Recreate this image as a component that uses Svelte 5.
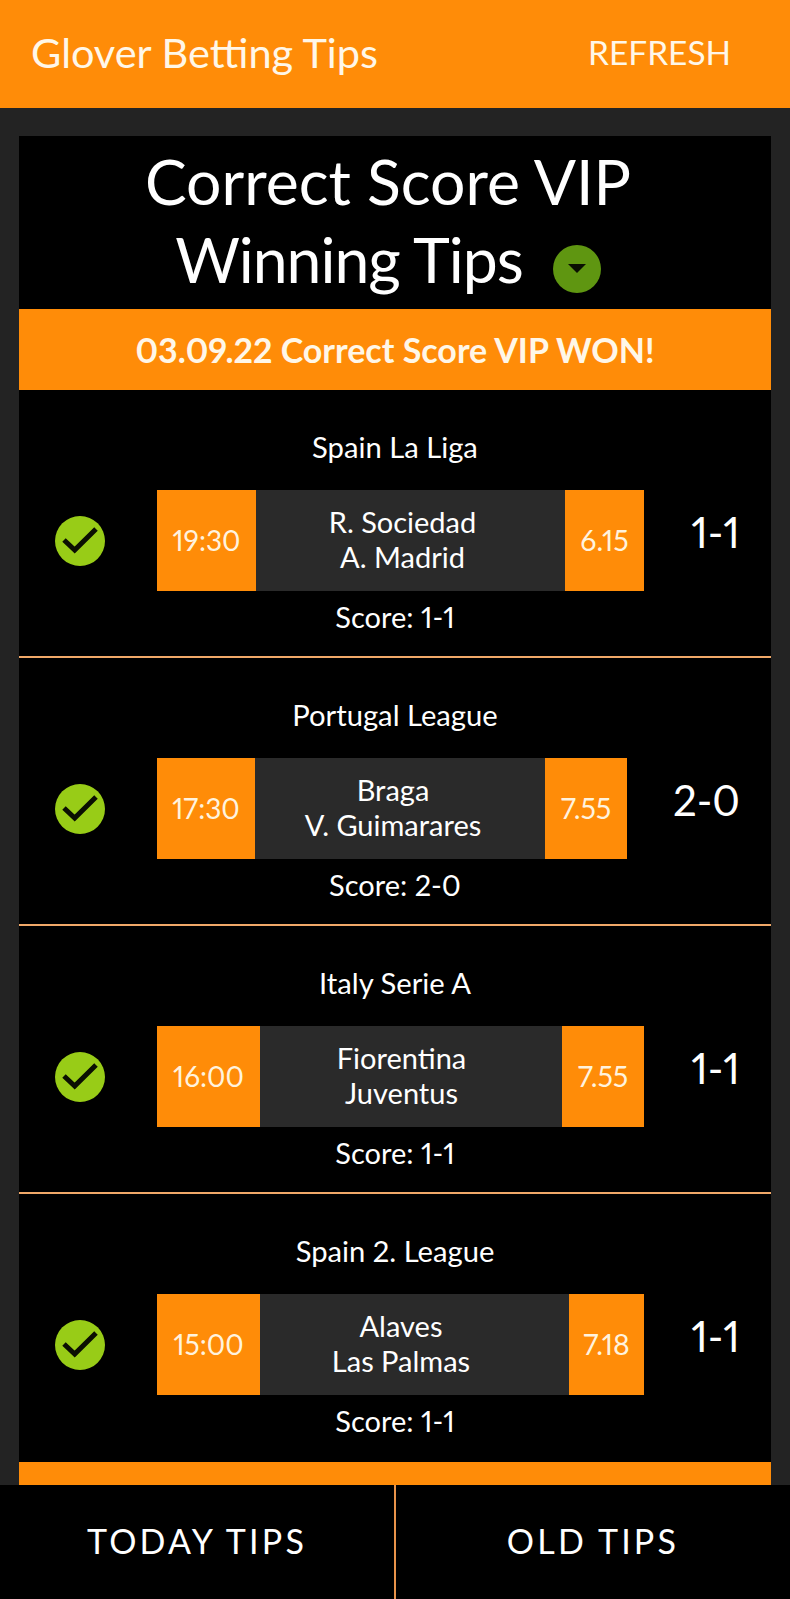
<script>
  const tips = [
    { league: 'Spain La Liga', time: '19:30', home: 'R. Sociedad', away: 'A. Madrid', odds: '6.15', score: '1-1', tw: 99, mw: 309, ow: 79, pad: 16 },
    { league: 'Portugal League', time: '17:30', home: 'Braga', away: 'V. Guimarares', odds: '7.55', score: '2-0', tw: 98, mw: 290, ow: 82, pad: 14 },
    { league: 'Italy Serie A', time: '16:00', home: 'Fiorentina', away: 'Juventus', odds: '7.55', score: '1-1', tw: 103, mw: 302, ow: 82, pad: 19 },
    { league: 'Spain 2. League', time: '15:00', home: 'Alaves', away: 'Las Palmas', odds: '7.18', score: '1-1', tw: 103, mw: 309, ow: 75, pad: 27 }
  ];
</script>

<div class="page">
  <header class="topbar">
    <span class="brand">Glover Betting Tips</span>
    <span class="refresh">REFRESH</span>
  </header>

  <main class="content">
    <section class="card">
      <h1 class="title">
        Correct Score VIP<br />
        <span class="second">Winning Tips</span>
        <svg class="drop" viewBox="0 0 48 48" aria-hidden="true">
          <circle cx="24" cy="24" r="24" fill="#5f9611" />
          <path d="M15 19h18l-9 9z" fill="#0a0f02" />
        </svg>
      </h1>
      <div class="banner">03.09.22 Correct Score VIP WON!</div>

      {#each tips as t}
        <article class="tip">
          <div class="league">{t.league}</div>
          <div class="match">
            <div class="status">
              <svg class="check" viewBox="0 0 50 50" aria-hidden="true">
                <circle cx="25" cy="25" r="25" fill="#98cc17" />
                <path d="M9 24 19.7 34 41 13" fill="none" stroke="#0b0f02" stroke-width="5" />
              </svg>
            </div>
            <div class="cell time" style="width:{t.tw}px">{t.time}</div>
            <div class="cell teams" style="width:{t.mw}px; padding-right:{t.pad}px">
              <span>{t.home}</span>
              <span>{t.away}</span>
            </div>
            <div class="cell odds" style="width:{t.ow}px">{t.odds}</div>
            <div class="result">{t.score}</div>
          </div>
          <div class="final">Score: {t.score}</div>
        </article>
      {/each}

      <div class="strip"></div>
    </section>
  </main>

  <nav class="tabs">
    <button class="tab">TODAY TIPS</button>
    <button class="tab right">OLD TIPS</button>
  </nav>
</div>

<style>
  :global(body) { margin: 0; background: #232323; }
  .page {
    width: 790px; height: 1599px; overflow: hidden;
    display: flex; flex-direction: column;
    background: #232323; color: #fff;
    font-family: "Lato", "Open Sans", sans-serif;
    font-variant-numeric: proportional-nums;
  }
  .topbar {
    height: 108px; flex: none; box-sizing: border-box;
    background: #ff8c08; color: #fff7e8;
    display: flex; align-items: center; justify-content: space-between;
    padding: 0 59px 4px 31px;
  }
  .brand { font-size: 41.5px; }
  .refresh { font-size: 33.4px; }
  .content { flex: 1; min-height: 0; padding: 28px 19px 0; overflow: hidden; }
  .card { background: #000; height: 100%; display: flex; flex-direction: column; }
  .title {
    margin: 0; height: 173px; flex: none; box-sizing: border-box; padding: 6px 14px 0 0;
    font-size: 62.5px; font-weight: 400; line-height: 78px; text-align: center;
  }
  .second { letter-spacing: -1px; }
  .drop { width: 48px; height: 48px; margin-left: 14px; vertical-align: -10px; }
  .banner {
    height: 81px; flex: none; background: #ff8c08; color: #fff7e8;
    display: flex; align-items: center; justify-content: center;
    font-size: 34px; font-weight: 700;
  }
  .tip {
    height: 268px; flex: none; box-sizing: border-box;
    border-bottom: 2px solid #f0a868;
    display: flex; flex-direction: column; align-items: center;
  }
  .tip:nth-last-child(2) { border-bottom: 0; }
  .league { margin-top: 39px; font-size: 29.2px; line-height: 36px; height: 36px; }
  .match { width: 100%; display: flex; margin-top: 25px; height: 101px; }
  .status { width: 138px; flex: none; display: flex; align-items: center; padding-left: 36px; box-sizing: border-box; }
  .check { width: 50px; height: 50px; }
  .cell { display: flex; align-items: center; justify-content: center; flex: none; font-size: 28px; box-sizing: border-box; padding-bottom: 2px; }
  .time, .odds { background: #ff8c08; color: #fff3de; }
  .odds { font-size: 28.5px; }
  .teams { background: #2a2a2a; flex-direction: column; line-height: 35px; font-size: 29px; padding-bottom: 4px; }
  .result { flex: 1; text-align: right; padding-right: 31px; font-size: 42px; line-height: 84px; height: 84px; }
  .final { margin-top: 8px; font-size: 29px; line-height: 36px; }
  .strip { height: 24px; flex: none; background: #ff8c08; margin-top: auto; }
  .tabs { height: 114px; flex: none; display: flex; background: #000; }
  .tab {
    flex: 1; background: none; border: 0; color: #fff; padding: 0 0 4px 0;
    font-family: inherit; font-size: 34px; letter-spacing: 3.2px;
  }
  .right { border-left: 2px solid #e8934a; }
</style>
